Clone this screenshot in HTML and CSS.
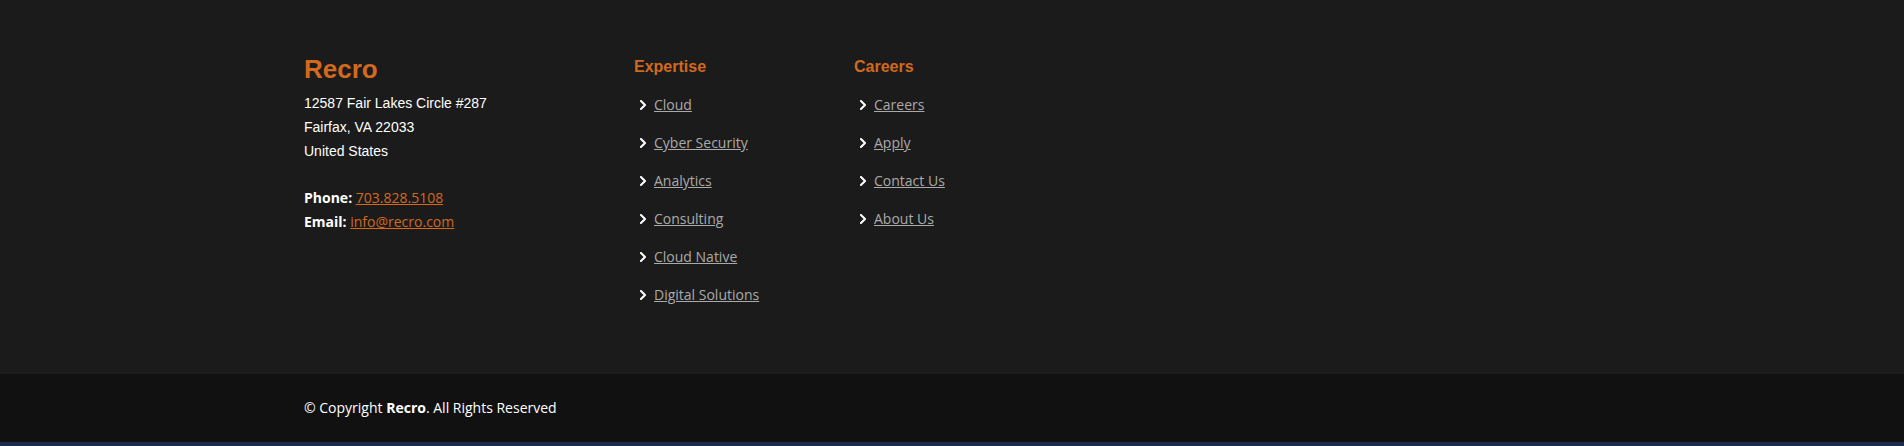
FILE: index.html
```html
<!DOCTYPE html>
<html lang="en">
<head>
<meta charset="utf-8">
<title>Recro Footer</title>
<link rel="stylesheet" href="styles.css">
</head>
<body>
<footer class="footer">
  <div class="footer-top">
    <div class="container">
      <div class="row">
        <div class="col col-contact">
          <h3 class="brand">Recro</h3>
          <p class="address">12587 Fair Lakes Circle #287<br>Fairfax, VA 22033<br>United States</p>
          <p class="contact"><strong>Phone:</strong> <a href="#">703.828.5108</a><br><strong>Email:</strong> <a href="#">info@recro.com</a></p>
        </div>
        <div class="col col-links">
          <h4 class="col-title">Expertise</h4>
          <ul class="links">
            <li><svg class="chev" viewBox="0 0 6 10"><polyline points="1,1 5,5 1,9"/></svg><a href="#">Cloud</a></li>
            <li><svg class="chev" viewBox="0 0 6 10"><polyline points="1,1 5,5 1,9"/></svg><a href="#">Cyber Security</a></li>
            <li><svg class="chev" viewBox="0 0 6 10"><polyline points="1,1 5,5 1,9"/></svg><a href="#">Analytics</a></li>
            <li><svg class="chev" viewBox="0 0 6 10"><polyline points="1,1 5,5 1,9"/></svg><a href="#">Consulting</a></li>
            <li><svg class="chev" viewBox="0 0 6 10"><polyline points="1,1 5,5 1,9"/></svg><a href="#">Cloud Native</a></li>
            <li><svg class="chev" viewBox="0 0 6 10"><polyline points="1,1 5,5 1,9"/></svg><a href="#">Digital Solutions</a></li>
          </ul>
        </div>
        <div class="col col-links">
          <h4 class="col-title">Careers</h4>
          <ul class="links">
            <li><svg class="chev" viewBox="0 0 6 10"><polyline points="1,1 5,5 1,9"/></svg><a href="#">Careers</a></li>
            <li><svg class="chev" viewBox="0 0 6 10"><polyline points="1,1 5,5 1,9"/></svg><a href="#">Apply</a></li>
            <li><svg class="chev" viewBox="0 0 6 10"><polyline points="1,1 5,5 1,9"/></svg><a href="#">Contact Us</a></li>
            <li><svg class="chev" viewBox="0 0 6 10"><polyline points="1,1 5,5 1,9"/></svg><a href="#">About Us</a></li>
          </ul>
        </div>
      </div>
    </div>
  </div>
  <div class="footer-bottom">
    <div class="container">
      <div class="copyright">© Copyright <strong>Recro</strong>. All Rights Reserved</div>
    </div>
  </div>
  <div class="footer-strip"></div>
</footer>
</body>
</html>
```
FILE: styles.css
```css
* { box-sizing: border-box; }
html, body { margin: 0; padding: 0; }
body {
  background: #1b1b1b;
  font-family: "Open Sans", "Liberation Sans", sans-serif;
  font-size: 14px;
  color: #ffffff;
  overflow: hidden;
}
.container {
  width: 1320px;
  margin: 0 auto;
  padding: 0 12px;
}
.footer-top {
  background: #1b1b1b;
  padding: 57px 0 60px;
}
.row {
  display: flex;
  margin: 0 -12px;
}
.col { padding: 0 12px; }
.col-contact { width: 330px; }
.col-links { width: 220px; }
.brand {
  margin: 0 0 10px;
  font-family: "Liberation Sans", Arial, sans-serif;
  font-weight: 700;
  font-size: 26px;
  line-height: 24px;
  color: #d2691e;
}
.address {
  margin: 0;
  font-family: "Liberation Sans", Arial, sans-serif;
  font-size: 14px;
  line-height: 24px;
  color: #ffffff;
}
.contact {
  margin: 23px 0 0;
  font-size: 14px;
  line-height: 24px;
}
.contact strong { font-weight: 700; color: #ffffff; }
.contact a { color: #d2691e; text-decoration: underline; }
.col-title {
  margin: 0 0 10px;
  font-family: "Liberation Sans", Arial, sans-serif;
  font-weight: 700;
  font-size: 16px;
  line-height: 1.2;
  color: #d2691e;
}
.links {
  list-style: none;
  margin: 0;
  padding: 0;
}
.links li {
  display: flex;
  align-items: center;
  padding: 7px 0 7px 6px;
  line-height: 24px;
}
.chev {
  width: 6px;
  height: 10px;
  margin: -1px 8px 0 0;
  flex: none;
}
.chev polyline {
  fill: none;
  stroke: #ffffff;
  stroke-width: 2;
  stroke-linecap: square;
}
.links a {
  color: #aaaaaa;
  text-decoration: underline;
  font-size: 14px;
}
.footer-bottom {
  background: #111111;
  padding: 22px 0;
}
.copyright {
  font-size: 14px;
  line-height: 24px;
  color: #ffffff;
}
.copyright strong { font-weight: 700; }
.footer-strip {
  height: 4px;
  background: #1c2c4c;
}
```
